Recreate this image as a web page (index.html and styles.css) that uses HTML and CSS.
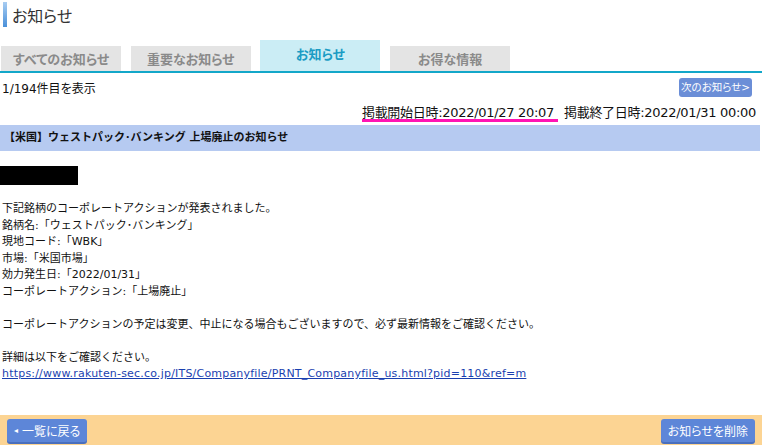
FILE: index.html
```html
<!DOCTYPE html>
<html lang="ja">
<head>
    <meta charset="UTF-8">
    <meta name="viewport" content="width=device-width, initial-scale=1.0">
    <title>お知らせ</title>
    <link rel="stylesheet" href="styles.css">
</head>
<body>
    <div class="wrapper">
        <h1 class="page-title">お知らせ</h1>

        <ul class="tabs">
            <li class="tab">すべてのお知らせ</li>
            <li class="tab">重要なお知らせ</li>
            <li class="tab active">お知らせ</li>
            <li class="tab">お得な情報</li>
        </ul>

        <div class="info-row">
            <span class="count">1/194件目を表示</span>
            <a class="btn-next" href="#">次のお知らせ&gt;</a>
        </div>

        <div class="dates">
            <span class="mark">掲載開始日時:2022/01/27 20:07</span>
            <span>掲載終了日時:2022/01/31 00:00</span>
        </div>

        <div class="notice-head">【米国】ウェストパック･バンキング 上場廃止のお知らせ</div>

        <div class="redacted"></div>

        <div class="notice-body">
            下記銘柄のコーポレートアクションが発表されました。<br>
            銘柄名:「ウェストパック･バンキング」<br>
            現地コード:「WBK」<br>
            市場:「米国市場」<br>
            効力発生日:「2022/01/31」<br>
            コーポレートアクション:「上場廃止」<br>
            <br>
            コーポレートアクションの予定は変更、中止になる場合もございますので、必ず最新情報をご確認ください。<br>
            <br>
            詳細は以下をご確認ください。<br>
            <a href="#">https://www.rakuten-sec.co.jp/ITS/Companyfile/PRNT_Companyfile_us.html?pid=110&amp;ref=m</a>
        </div>
    </div>

    <div class="footer-bar">
        <a class="btn" href="#"><span class="arrow">◂</span>一覧に戻る</a>
        <a class="btn" href="#">お知らせを削除</a>
    </div>
</body>
</html>
```

FILE: styles.css
```css
body {
    margin: 0;
    font-family: "DejaVu Sans", "Noto Sans CJK JP", sans-serif;
    font-size: 12px;
    color: #111;
    background-color: #fff;
}

.wrapper {
    width: 760px;
    height: 415px;
}

.page-title {
    display: flex;
    align-items: center;
    gap: 5px;
    margin: 0;
    padding: 2px 0 0 3px;
    height: 25px;
    font-size: 16px;
    font-weight: normal;
    font-feature-settings: "palt";
    color: #333;
}

.page-title::before {
    content: "";
    width: 4px;
    height: 25px;
    background: linear-gradient(#a8cdf2, #4a90d9);
}

.tabs {
    display: flex;
    align-items: flex-end;
    gap: 9.7px;
    list-style: none;
    margin: 13px 0 0;
    padding: 0 0 0 1px;
    height: 31px;
    width: 761px;
    border-bottom: 2px solid #13a7c9;
}

.tab {
    width: 120px;
    height: 25px;
    line-height: 27px;
    text-align: center;
    background-color: #e4e4e4;
    color: #8a8a8a;
    font-weight: bold;
    font-size: 13px;
    font-feature-settings: "palt";
}

.tab.active {
    height: 31px;
    line-height: 30px;
    background-color: #cbedf5;
    color: #1b9cc4;
}

.info-row {
    display: flex;
    justify-content: space-between;
    align-items: center;
    padding: 4px 0 0 2px;
    height: 21px;
    font-feature-settings: "palt";
}

.btn-next {
    margin-right: 8px;
    padding: 0 2px;
    height: 19px;
    line-height: 19px;
    border-radius: 3px;
    background-color: #6b8ed7;
    color: #fff;
    font-size: 10.5px;
    text-decoration: none;
}

.dates {
    display: flex;
    justify-content: flex-end;
    gap: 6px;
    padding: 4px 4px 0 0;
    height: 23px;
    font-size: 13px;
    letter-spacing: -0.3px;
}

.mark {
    height: 17px;
    padding-right: 4px;
    border-bottom: 3px solid #ff14b4;
}

.notice-head {
    height: 26px;
    line-height: 26px;
    padding-left: 4px;
    background-color: #b6caf1;
    font-size: 11px;
    font-weight: bold;
    color: #111;
}

.redacted {
    width: 78px;
    height: 19px;
    margin-top: 15px;
    background-color: #000;
}

.notice-body {
    margin-top: 16px;
    padding-left: 2px;
    font-size: 11px;
    line-height: 16.5px;
    color: #111;
}

.notice-body a {
    color: #1a3fb0;
    letter-spacing: 0.2px;
}

.footer-bar {
    display: flex;
    justify-content: space-between;
    align-items: flex-start;
    height: 30px;
    padding: 4px 7px 0;
    background-color: #fcd493;
    box-sizing: border-box;
}

.btn {
    display: flex;
    align-items: center;
    gap: 4px;
    height: 23px;
    padding: 0 7px;
    border-radius: 3px;
    background-color: #5d86d8;
    box-shadow: 0 2px 0 #4a6fbd;
    color: #fff;
    font-size: 12px;
    font-feature-settings: "palt";
    text-decoration: none;
}

.arrow {
    font-size: 8px;
}
```
